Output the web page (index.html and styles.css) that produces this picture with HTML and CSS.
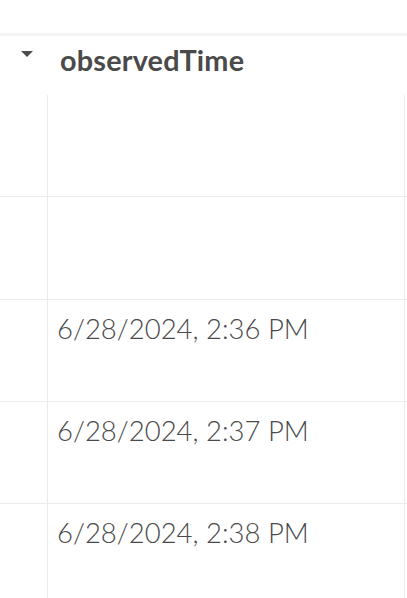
FILE: index.html
```html
<!DOCTYPE html>
<html>
<head>
<meta charset="utf-8">
<link rel="stylesheet" href="styles.css">
</head>
<body>
<div class="page">
  <div class="top"></div>
  <div class="band"></div>
  <div class="header">
    <div class="caret-cell"><span class="caret"></span></div>
    <div class="title">observedTime</div>
  </div>
  <div class="rows">
    <div class="row"><div class="lead"></div><div class="cell"></div><div class="tail"></div></div>
    <div class="row"><div class="lead"></div><div class="cell"></div><div class="tail"></div></div>
    <div class="row"><div class="lead"></div><div class="cell">6/28/2024, 2:36 PM</div><div class="tail"></div></div>
    <div class="row"><div class="lead"></div><div class="cell">6/28/2024, 2:37 PM</div><div class="tail"></div></div>
    <div class="row"><div class="lead"></div><div class="cell">6/28/2024, 2:38 PM</div><div class="tail"></div></div>
  </div>
</div>
</body>
</html>
```
FILE: styles.css
```css
html, body {
  margin: 0;
  padding: 0;
  background: #ffffff;
  overflow: hidden;
}
.page {
  width: 407px;
  height: 598px;
  overflow: hidden;
  font-family: Lato, "Noto Sans", sans-serif;
}
.top {
  height: 33px;
}
.band {
  height: 3px;
  background: #f3f3f3;
}
.header {
  height: 59px;
  display: flex;
  align-items: center;
}
.caret-cell {
  width: 60px;
  height: 100%;
  display: flex;
  align-items: flex-start;
  padding-top: 15px;
  box-sizing: border-box;
  padding-left: 21px;
}
.caret {
  width: 0;
  height: 0;
  border-left: 6.5px solid transparent;
  border-right: 6.5px solid transparent;
  border-top: 6.5px solid #4d4d4d;
}
.title {
  font-size: 28.8px;
  font-weight: 700;
  color: #4a4a4a;
  letter-spacing: 0.2px;
  margin-top: -12px;
}
.rows {
  display: flex;
  flex-direction: column;
}
.row {
  display: grid;
  grid-template-columns: 47px 358px 2px;
  height: 102.25px;
  box-sizing: border-box;
  border-bottom: 1px solid #ebebeb;
}
.row:last-child {
  border-bottom: none;
}
.cell {
  border-left: 1px solid #ebebeb;
  border-right: 1px solid #ebebeb;
  padding: 12px 0 0 9px;
  font-size: 27.5px;
  font-weight: 300;
  color: #4a4a4a;
  box-sizing: border-box;
  white-space: nowrap;
}
```
